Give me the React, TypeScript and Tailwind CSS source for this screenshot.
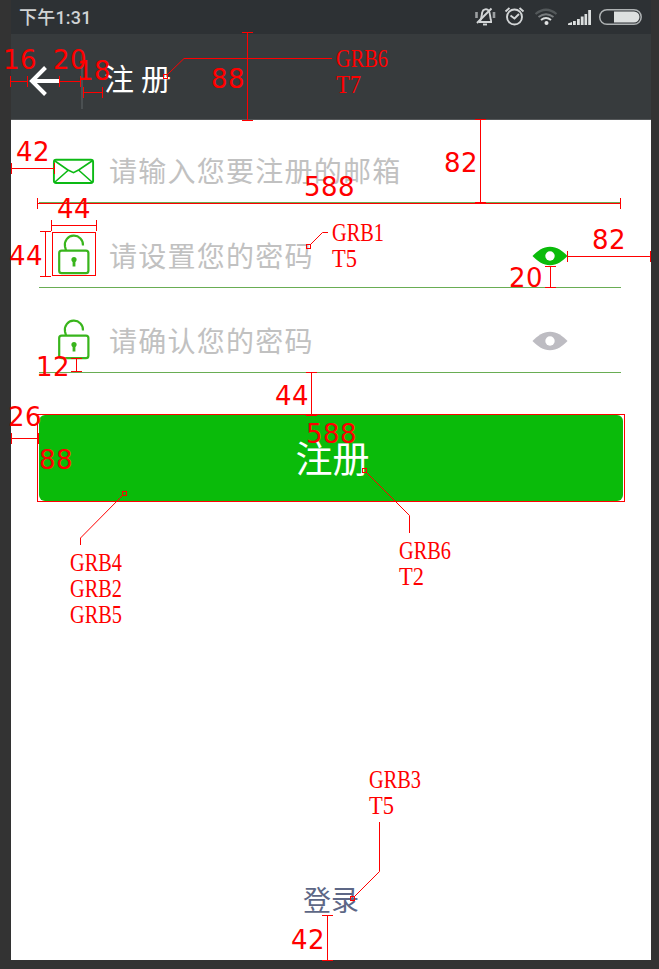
import React from 'react';

const RED = '#ff0000';

function StatusIcons() {
  return (
    <svg width="170" height="26" viewBox="472 4 170 26" fill="none">
      <g stroke="#d3d6d7" strokeWidth="1.9">
        <path d="M479 22h13M480 21c2-3 1.500-6 2.300-9 .7-3 4.700-3.500 6.300-1.500 2 2.500 1 7 2.700 10.500" />
        <path d="M477 23L491.500 8.500" />
        <path d="M476.500 12v6M494 12v6" strokeWidth="2.600" stroke="#9b9fa1" />
        <path d="M483 24.500h4" />
        <circle cx="514.500" cy="17" r="7.500" />
        <path d="M510.500 15.500l4 3 4.500-4.500M505.500 11.500l4-3.500M523.500 11.500l-4-3.500" />
      </g>
      <path d="M535.500 14q10.500-8.500 21 0" stroke="#53585a" strokeWidth="2.200" />
      <path d="M538.500 17q7.500-5.500 15 0" stroke="#777b7d" strokeWidth="2" />
      <path d="M541 20q5-4 10 0" stroke="#dcdfdf" strokeWidth="2" />
      <circle cx="546.500" cy="23" r="2" fill="#e2e4e4" />
      <path
        d="M568 25v-1.500l4-1.500v3zM573 25v-4h2.800v4zM577 25v-6h2.800v6zM580.800 25v-8.500h2.800V25zM584.500 25V14h2.600v11zM588.200 25V10h2.800v15z"
        fill="#dcdfdf"
      />
      <rect x="599.700" y="9.700" width="41.500" height="14.600" rx="7.300" stroke="#aeb2b3" strokeWidth="1.500" />
      <path d="M614 11.500h20a5.500 5.500 0 0 1 0 11h-20z" fill="#dde0e0" />
    </svg>
  );
}

function MailIcon() {
  return (
    <svg width="44" height="44" viewBox="52 149 44 44" fill="none" stroke="#0cb914" strokeWidth="1.900">
      <rect x="53.900" y="159.800" width="39.200" height="23.200" rx="2.200" />
      <path d="M55 161l12.500 8.700 6 3 5.500-3L92 161M55 182l13.500-12M92 182l-13.500-12" strokeWidth="1.600" />
    </svg>
  );
}

function LockIcon() {
  return (
    <svg width="44" height="44" viewBox="52 234 44 44" fill="none" stroke="#39b51c" strokeWidth="2.200">
      <rect x="59.200" y="250.600" width="29.200" height="22.600" rx="2.500" />
      <path d="M66 250.500L65 246.500A9.100 9.100 0 1 1 83 245.500" />
      <circle cx="74" cy="259.500" r="2.600" fill="#39b51c" stroke="none" />
      <path d="M74 260v6.500" strokeWidth="2.800" />
    </svg>
  );
}

function EyeIcon({ color }: { color: string }) {
  return (
    <svg width="36" height="20" viewBox="0 0 36 20">
      <path
        d="M.5 10C6 4.500 11 .7 18 .7S30 4.500 35.500 10C30 15.500 25 19.300 18 19.300S6 15.500.5 10z"
        fill={color}
      />
      <circle cx="18" cy="10" r="4.700" fill="#fff" />
    </svg>
  );
}

function Field({ icon, text, eye, first }: { icon: React.ReactNode; text: string; eye?: string; first?: boolean }) {
  return (
    <div
      className={`flex items-end border-b border-[#69ad54] pb-[9px] pl-[13px] pr-[53px] ${first ? 'h-[83px]' : 'h-[85px]'}`}
    >
      <div className="flex h-11 w-full items-center">
        {icon}
        <span className="-mt-[2px] ml-[13px] flex-1 whitespace-nowrap text-[28px] leading-[44px] tracking-[1.25px] text-[#c1c1c1]">
          {text}
        </span>
        {eye && <EyeIcon color={eye} />}
      </div>
    </div>
  );
}

// Horizontal measures: x1, x2, y. Both ends carry an 11px tick.
const across = [
  [10, 27, 81],
  [59, 80, 81],
  [83, 102, 92],
  [11, 54, 168],
  [37, 620, 203],
  [51, 96, 225],
  [567, 650, 256],
  [11, 38, 438],
];

// Vertical measures: x, y1, y2.
const down = [
  [247, 32, 120],
  [480, 119, 202],
  [45, 231, 276],
  [550, 266, 287],
  [76, 358, 371],
  [311, 372, 415],
  [327, 915, 960],
];

const leaders = [
  'M167 75L184 58.500H332',
  'M310 245L322.500 232.500H328',
  'M366 472L409.500 515.500V533',
  'M123 495L80.500 538V545',
  'M354 897L379.500 871.500V822',
];

const anchors = [
  [165, 76],
  [308, 246],
  [364, 470],
  [124, 493],
  [352, 898],
];

// Measure labels: text, left edge, baseline.
const sizes: [string, number, number][] = [
  ['16', 3, 69],
  ['20', 53, 69],
  ['18', 77, 80],
  ['88', 211, 88],
  ['42', 16, 161],
  ['82', 444, 172],
  ['588', 304, 196],
  ['44', 57, 218],
  ['44', 9, 265],
  ['82', 592, 249],
  ['20', 509, 287],
  ['12', 36, 376],
  ['44', 275, 405],
  ['26', 8, 426],
  ['88', 39, 469],
  ['588', 306, 443],
  ['42', 291, 949],
];

// Style codes: text, left edge, baseline, drawn width.
const codes: [string, number, number, number][] = [
  ['GRB6', 336, 67, 52],
  ['T7', 336, 93, 25],
  ['GRB1', 332, 241, 52],
  ['T5', 332, 267, 25],
  ['GRB6', 399, 559, 52],
  ['T2', 399, 585, 25],
  ['GRB4', 70, 571, 52],
  ['GRB2', 70, 597, 52],
  ['GRB5', 70, 623, 52],
  ['GRB3', 369, 788, 52],
  ['T5', 369, 814, 25],
];

function Annotations() {
  return (
    <svg className="pointer-events-none absolute left-0 top-0" width="659" height="969" fill="none">
      <g fill={RED} shapeRendering="crispEdges">
        {across.map(([a, b, y], i) => (
          <g key={i}>
            <rect x={a} y={y} width={b - a + 1} height="1" />
            <rect x={a} y={y - 5} width="1" height="11" />
            <rect x={b} y={y - 5} width="1" height="11" />
          </g>
        ))}
        {down.map(([x, a, b], i) => (
          <g key={i}>
            <rect x={x} y={a} width="1" height={b - a + 1} />
            <rect x={x - 5} y={a} width="11" height="1" />
            <rect x={x - 5} y={b} width="11" height="1" />
          </g>
        ))}
      </g>
      <g stroke={RED}>
        <rect x="52.500" y="232.500" width="43" height="43" />
        <rect x="37.500" y="414.500" width="587" height="87" />
        {leaders.map((d) => (
          <path key={d} d={d} />
        ))}
        {anchors.map(([x, y]) => (
          <rect key={x} x={x - 1.5} y={y - 1.5} width="4" height="4" />
        ))}
      </g>
      <g fill={RED} className="font-['DejaVu_Sans',sans-serif] text-[26px] tracking-[0.450px]">
        {sizes.map(([t, x, y]) => (
          <text key={`${x}-${y}`} x={x} y={y}>
            {t}
          </text>
        ))}
      </g>
      <g fill={RED} className="font-['Liberation_Serif',serif] text-[26px]">
        {codes.map(([t, x, y, w]) => (
          <text key={`${x}-${y}`} x={x} y={y} textLength={w} lengthAdjust="spacingAndGlyphs">
            {t}
          </text>
        ))}
      </g>
    </svg>
  );
}

export default function App() {
  return (
    <div className="relative h-[969px] w-[659px] overflow-hidden bg-[#333333] pl-[11px] font-['Noto_Sans_CJK_SC',sans-serif]">
      <main className="flex h-[960px] w-[640px] flex-col bg-white">
        <div className="flex h-[34px] shrink-0 items-center justify-between bg-[#2d3134] pl-[8px] pr-[9px]">
          <span className="mt-[1px] font-['Roboto','Noto_Sans_CJK_SC',sans-serif] text-[18px] font-medium leading-[34px] tracking-[0.2px] text-[#d0d3d4]">
            下午1:31
          </span>
          <StatusIcons />
        </div>
        <header className="flex h-[86px] shrink-0 items-center border-b border-[#55585a] bg-[#373b3d] pl-[18px] text-white">
          <svg width="30" height="30" viewBox="0 0 30 30" className="mt-[9px]" fill="none" stroke="#fff" strokeWidth="4">
            <path d="M30 15H3M16.500 1.500L3 15l13.500 13.500" />
          </svg>
          <div className="ml-[22px] mt-[6px] h-[58px] w-[2px] bg-[#4b5052]" />
          <h1 className="ml-[21px] whitespace-pre text-[30px] leading-[40px] tracking-[0.2px]">注 册</h1>
        </header>
        <section className="ml-[28px] w-[582px]">
          <Field first icon={<MailIcon />} text="请输入您要注册的邮箱" />
          <Field icon={<LockIcon />} text="请设置您的密码" eye="#0abb0a" />
          <Field icon={<LockIcon />} text="请确认您的密码" eye="#bdbcc2" />
        </section>
        <button className="ml-[28px] mt-[42px] h-[86px] w-[584px] shrink-0 rounded-[6px] bg-[#0abb0a] pb-[2px] pl-[3px] text-[37px] leading-[84px] text-white">
          注册
        </button>
        <a className="mb-[41px] mt-auto text-center text-[28px] leading-[40px] text-[#5d6786]">登录</a>
      </main>
      <Annotations />
    </div>
  );
}
